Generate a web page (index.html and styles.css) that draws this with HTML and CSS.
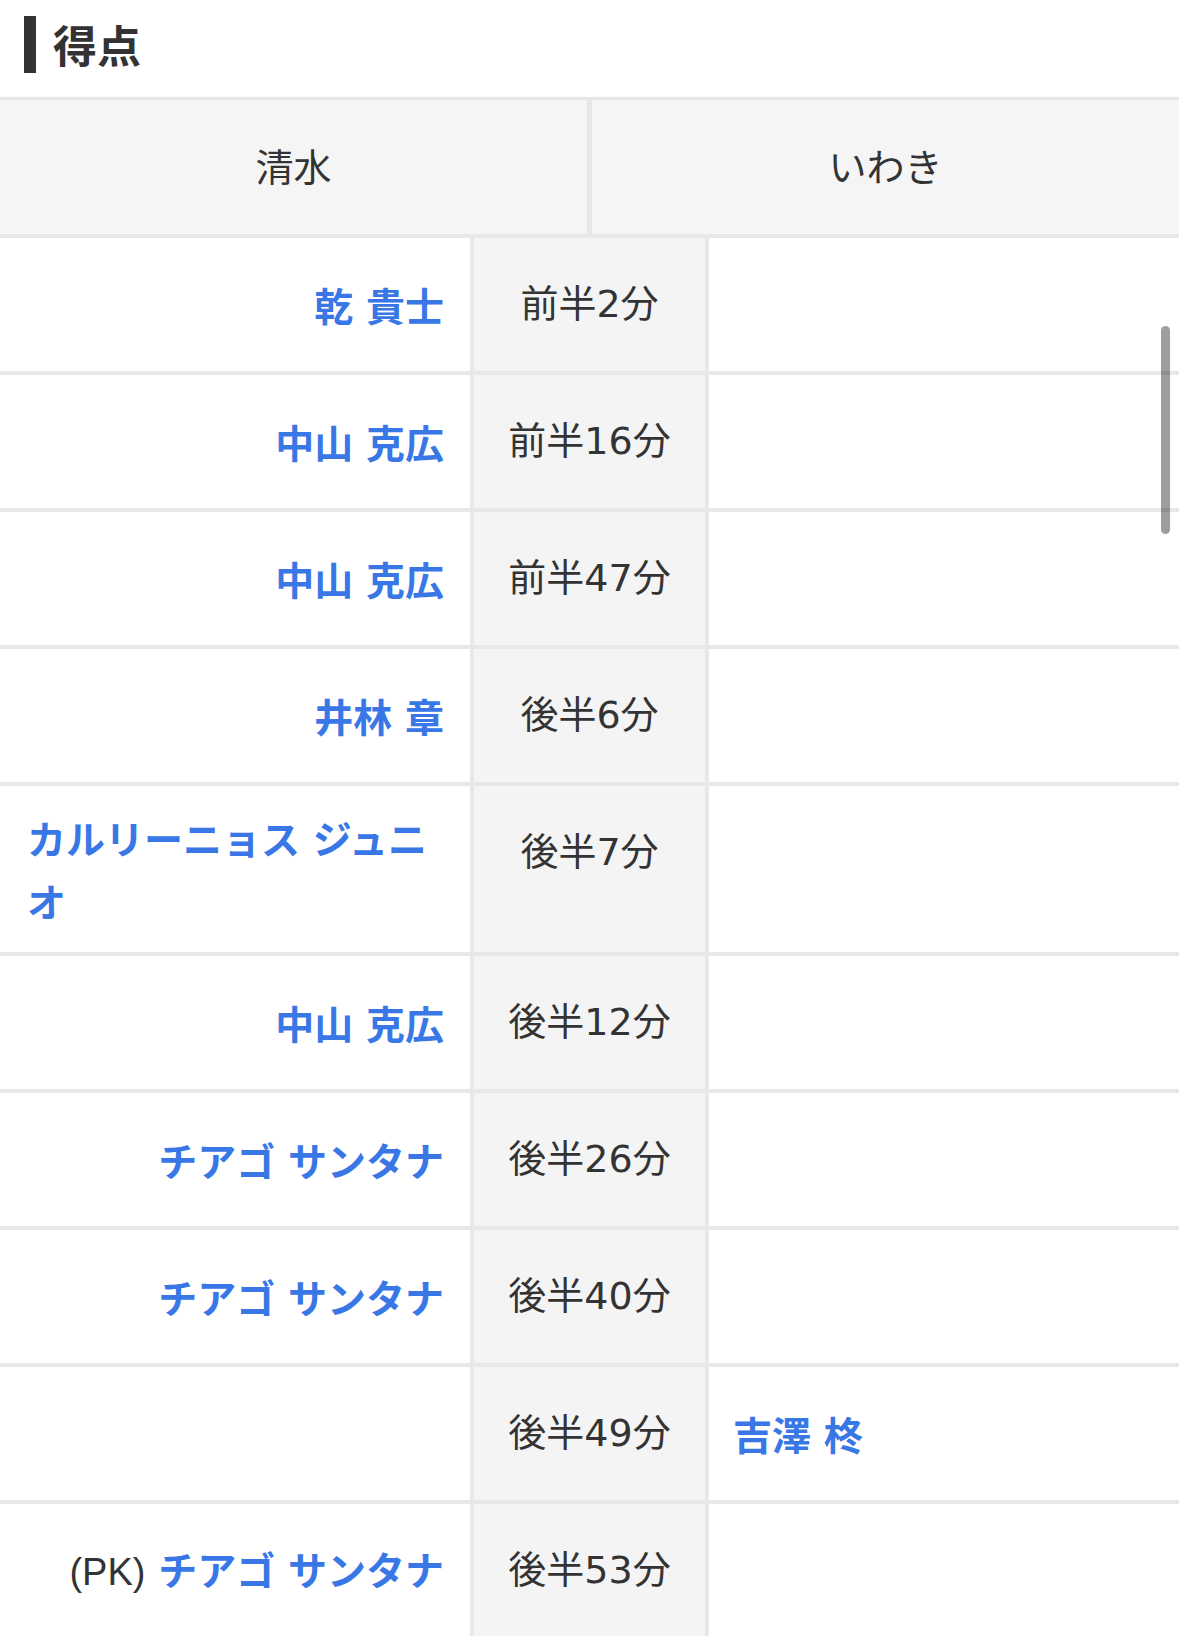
FILE: index.html
```html
<!DOCTYPE html>
<html lang="ja">
<head>
<meta charset="utf-8">
<title>得点</title>
<link rel="stylesheet" href="styles.css">
</head>
<body>
<div class="page">
  <h2 class="section-title"><span class="title-bar"></span><span class="title-text">得点</span></h2>
  <div class="score-table">
    <div class="team-head">
      <div class="team">清水</div>
      <div class="team">いわき</div>
    </div>
    <div class="goals">
      <div class="home"><span class="nm"><a class="player">乾 貴士</a></span></div>
      <div class="time">前半2分</div>
      <div class="away"></div>

      <div class="home"><span class="nm"><a class="player">中山 克広</a></span></div>
      <div class="time">前半16分</div>
      <div class="away"></div>

      <div class="home"><span class="nm"><a class="player">中山 克広</a></span></div>
      <div class="time">前半47分</div>
      <div class="away"></div>

      <div class="home"><span class="nm"><a class="player">井林 章</a></span></div>
      <div class="time">後半6分</div>
      <div class="away"></div>

      <div class="home"><span class="nm"><a class="player">カルリーニョス ジュニオ</a></span></div>
      <div class="time">後半7分</div>
      <div class="away"></div>

      <div class="home"><span class="nm"><a class="player">中山 克広</a></span></div>
      <div class="time">後半12分</div>
      <div class="away"></div>

      <div class="home"><span class="nm"><a class="player">チアゴ サンタナ</a></span></div>
      <div class="time">後半26分</div>
      <div class="away"></div>

      <div class="home"><span class="nm"><a class="player">チアゴ サンタナ</a></span></div>
      <div class="time">後半40分</div>
      <div class="away"></div>

      <div class="home"></div>
      <div class="time">後半49分</div>
      <div class="away"><span class="nm"><a class="player">吉澤 柊</a></span></div>

      <div class="home"><span class="nm"><span class="note">(PK)</span> <a class="player">チアゴ サンタナ</a></span></div>
      <div class="time">後半53分</div>
      <div class="away"></div>
    </div>
  </div>
  <div class="scrollbar"></div>
</div>
</body>
</html>
```

FILE: styles.css
```css
html, body {
  margin: 0;
  padding: 0;
  background: #ffffff;
}

body {
  font-family: "Noto Sans CJK JP", "Noto Sans", sans-serif;
  color: #333333;
  width: 1179px;
  height: 1636px;
  overflow: hidden;
}

.page {
  position: relative;
  width: 1179px;
}

.section-title {
  display: flex;
  align-items: center;
  margin: 0;
  padding: 16px 0 24px 24px;
  height: 57px;
}

.title-bar {
  display: block;
  width: 12px;
  height: 57px;
  background: #333333;
}

.title-text {
  margin-left: 17px;
  font-size: 44px;
  font-weight: 700;
  line-height: 57px;
  color: #333333;
}

.score-table {
  border-top: 3px solid #e6e6e6;
  background: #e8e8e8;
}

.team-head {
  display: grid;
  grid-template-columns: 587px 1fr;
  column-gap: 5px;
  padding-bottom: 4px;
}

.team {
  height: 128px;
  padding-bottom: 6px;
  display: flex;
  align-items: center;
  justify-content: center;
  background: #f5f5f5;
  font-size: 38px;
  color: #333333;
}

.goals {
  display: grid;
  grid-template-columns: 470px 231px 1fr;
  grid-auto-rows: minmax(133px, auto);
  gap: 4px;
}

.home, .away {
  background: #ffffff;
  display: flex;
  align-items: center;
  padding: 20px 26px 20px 27px;
}

.home {
  justify-content: flex-end;
}

.away {
  justify-content: flex-start;
  padding-left: 24px;
}

.nm {
  display: inline-block;
  font-size: 39px;
  line-height: 63px;
  word-spacing: 4px;
  text-align: left;
}

.player {
  color: #3a77e6;
  font-weight: 700;
  text-decoration: none;
}

.note {
  color: #333333;
  font-family: "Liberation Sans", "Noto Sans CJK JP", sans-serif;
  font-size: 38px;
  font-weight: 400;
}

.time {
  background: #f4f4f4;
  text-align: center;
  font-family: "DejaVu Sans", "Noto Sans CJK JP", sans-serif;
  font-size: 38px;
  line-height: 63px;
  padding-top: 35px;
  color: #333333;
}

.scrollbar {
  position: absolute;
  left: 1161px;
  top: 326px;
  width: 9px;
  height: 208px;
  border-radius: 5px;
  background: rgba(0, 0, 0, 0.38);
}
```
